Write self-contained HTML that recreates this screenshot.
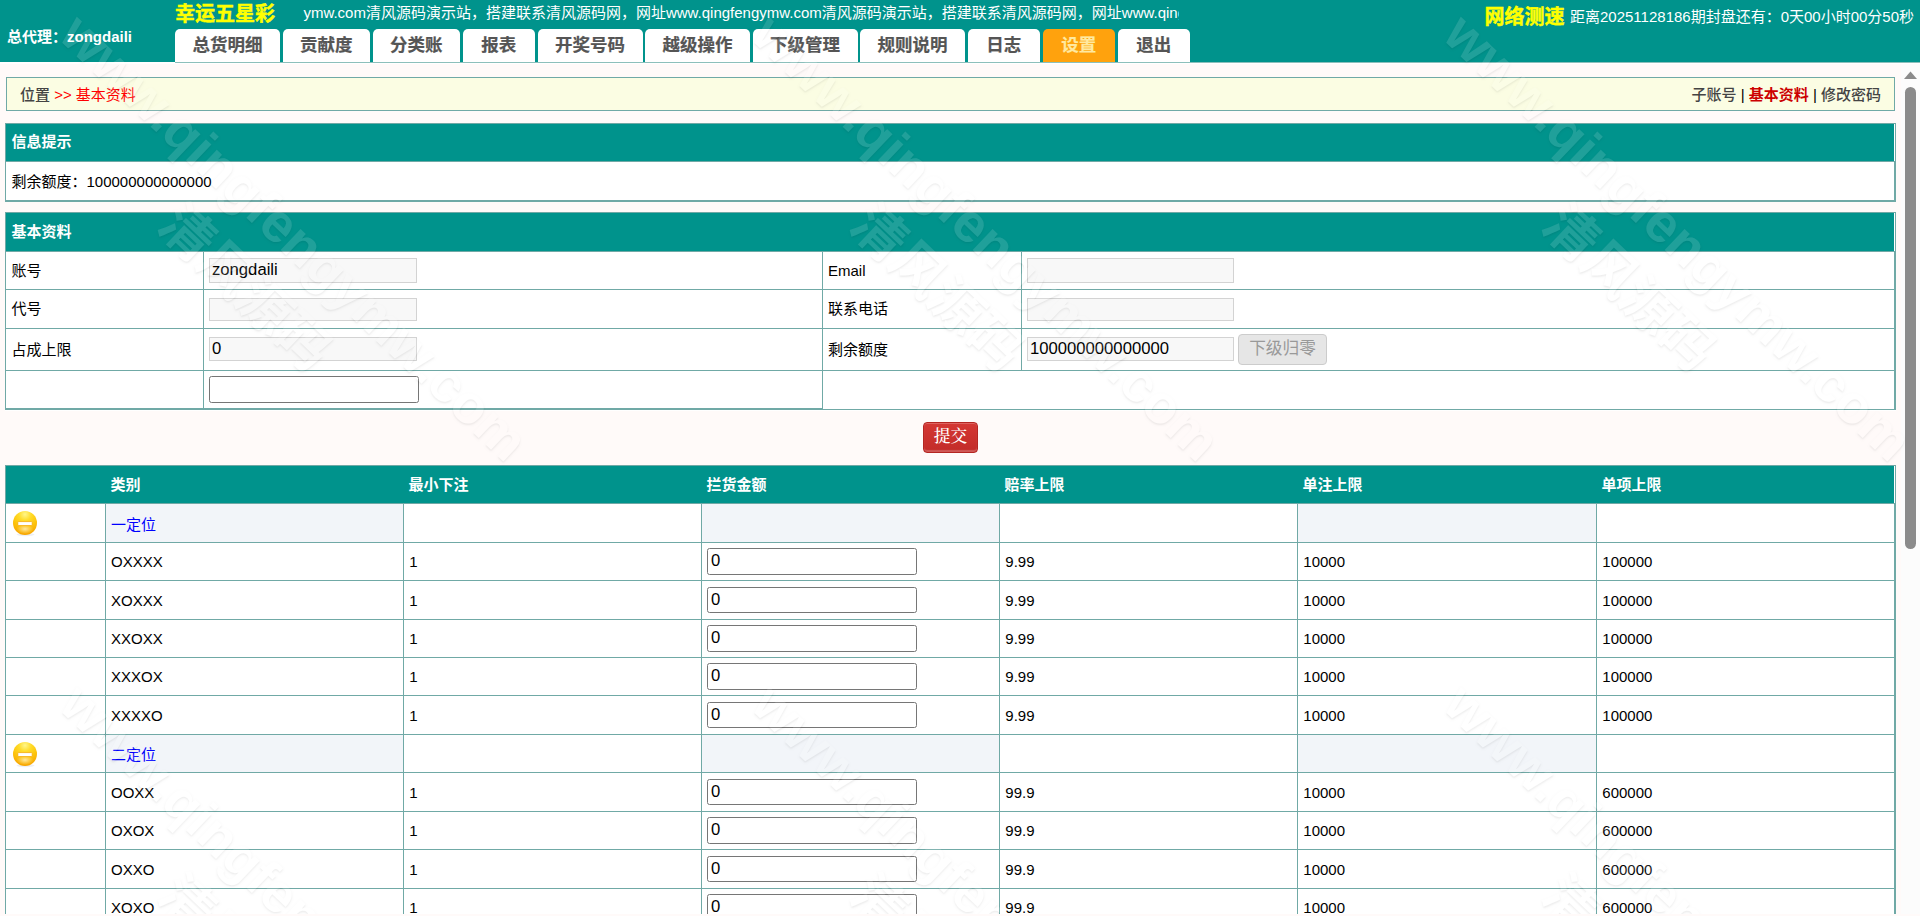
<!DOCTYPE html>
<html lang="zh-CN"><head><meta charset="utf-8"><title>基本资料</title><style>
*{box-sizing:border-box;margin:0;padding:0}
html,body{width:1920px;height:916px;overflow:hidden}
body{position:relative;background:#fffaf9;font-family:"Liberation Sans","Noto Sans CJK SC",sans-serif;font-size:15px;color:#000}
.a{position:absolute;white-space:nowrap}
.t{position:absolute;white-space:nowrap;line-height:20px;height:20px}
.hdr{left:0;top:0;width:1920px;height:62px;background:#00938c}
.tab{top:29px;height:33px;background:#fff;border-radius:5px 5px 0 0;text-align:center;font-weight:bold;font-size:17.5px;line-height:32px;color:#555;-webkit-text-stroke:.2px #555}
.tab.on{background:#ffa20d;color:#ffe9a0;-webkit-text-stroke:.2px #ffe9a0}
.teal{background:#00938c}
.w{background:#fff}
.ln{background:#70a9a6}
.hb{color:#fff;font-weight:bold}
.inp{position:absolute;background:#fff;border:1px solid #767676;border-radius:2.5px;font-size:16.67px;line-height:20px;padding-left:3px;white-space:nowrap;overflow:hidden}
.dis{position:absolute;background:#f8f8f8;border:1px solid #d3d3d3;font-size:16.67px;line-height:20px;padding-left:2px;white-space:nowrap;overflow:hidden}
.alt{background:#f2f5f9}
a{color:#00f;text-decoration:none}
.wm{font-weight:bold;font-size:54.7px;line-height:80px;height:80px;color:#fff;opacity:.125;text-shadow:1px 1px 2px rgba(0,0,0,.55);transform-origin:0 50%;transform:rotate(43.5deg);pointer-events:none;font-family:"Liberation Sans","Noto Sans CJK SC",sans-serif}
</style></head><body>
<div class="a hdr" style="left:0px;top:0px;width:1920px;height:62px;"></div>
<div class="a w" style="left:0px;top:62px;width:1920px;height:2px;"></div>
<div class="a " style="left:175px;top:62px;width:1745px;height:1px;background:#8cbfbb"></div>
<div class="t hb" style="left:7px;top:27px;">总代理：zongdaili</div>
<div class="t " style="left:175px;top:3.8px;font-size:20px;font-weight:bold;color:#ff0;-webkit-text-stroke:.45px #ff0">幸运五星彩</div>
<div class="a" style="left:303px;top:2px;width:876px;height:22px;overflow:hidden;color:#fff;line-height:22px"><span style="position:absolute;left:0.4px;top:0">ymw.com清风源码演示站，搭建联系清风源码网，网址www.qingfengymw.com清风源码演示站，搭建联系清风源码网，网址www.qingfengymw.com清风源码演示站</span></div>
<div class="a tab" style="left:175px;width:105px">总货明细</div>
<div class="a tab" style="left:282.5px;width:87.5px">贡献度</div>
<div class="a tab" style="left:372.5px;width:87.5px">分类账</div>
<div class="a tab" style="left:462.5px;width:72.5px">报表</div>
<div class="a tab" style="left:537.5px;width:105px">开奖号码</div>
<div class="a tab" style="left:645px;width:105px">越级操作</div>
<div class="a tab" style="left:752.5px;width:105px">下级管理</div>
<div class="a tab" style="left:860px;width:105px">规则说明</div>
<div class="a tab" style="left:967.5px;width:72.5px">日志</div>
<div class="a tab on" style="left:1042.5px;width:72.5px">设置</div>
<div class="a tab" style="left:1117.5px;width:72.5px">退出</div>
<div class="t " style="left:1484.5px;top:7px;font-size:20px;font-weight:bold;color:#ff0;-webkit-text-stroke:.45px #ff0">网络测速</div>
<div class="t " style="left:1570px;top:7.3px;color:#fff">距离20251128186期封盘还有：0天00小时00分50秒</div>
<div class="a " style="left:1901px;top:64px;width:19px;height:850px;background:#fcfcfc"></div>
<svg class="a" style="left:1901px;top:64px" width="19" height="850" viewBox="0 0 19 850"><path d="M9.5 7.5 L16 15 L3 15 Z" fill="#8b8b8b"/><rect x="4" y="23" width="11" height="462" rx="5.5" fill="#8b8b8b"/></svg>
<div class="a " style="left:6px;top:77px;width:1889px;height:34px;background:#fbfde3;border:1px solid #70a9a6"></div>
<div class="t " style="left:20px;top:84.5px;"><span style="color:#444;font-weight:500">位置</span> <span style="color:#f00">&gt;&gt; 基本资料</span></div>
<div class="t " style="right:39px;top:84.5px;"><span style="color:#444;font-weight:500">子账号</span> | <b style="color:#c00">基本资料</b> | <span style="color:#444;font-weight:500">修改密码</span></div>
<div class="a w" style="left:5px;top:123px;width:1891px;height:79px;"></div>
<div class="a ln" style="left:5px;top:123px;width:1891px;height:1px;"></div>
<div class="a ln" style="left:5px;top:123px;width:1px;height:79px;"></div>
<div class="a ln" style="left:1894px;top:161px;width:2px;height:41px;"></div>
<div class="a ln" style="left:1895px;top:123px;width:1px;height:38px;"></div>
<div class="a teal" style="left:6px;top:124px;width:1888px;height:37px;"></div>
<div class="a ln" style="left:5px;top:161px;width:1890px;height:1px;"></div>
<div class="a ln" style="left:5px;top:200px;width:1891px;height:2px;"></div>
<div class="t hb" style="left:11.5px;top:132.4px;">信息提示</div>
<div class="t " style="left:11.5px;top:171.5px;">剩余额度：100000000000000</div>
<div class="a w" style="left:5px;top:212px;width:1891px;height:198px;"></div>
<div class="a ln" style="left:5px;top:212px;width:1891px;height:1px;"></div>
<div class="a ln" style="left:5px;top:212px;width:1px;height:198px;"></div>
<div class="a ln" style="left:1894px;top:251px;width:2px;height:159px;"></div>
<div class="a ln" style="left:1895px;top:212px;width:1px;height:39px;"></div>
<div class="a teal" style="left:6px;top:213px;width:1888px;height:38px;"></div>
<div class="a ln" style="left:5px;top:251px;width:1890px;height:1px;"></div>
<div class="a ln" style="left:5px;top:408px;width:818px;height:2px;"></div>
<div class="a ln" style="left:822px;top:409px;width:1074px;height:1px;"></div>
<div class="a w" style="left:5px;top:410px;width:1891px;height:1px;"></div>
<div class="t hb" style="left:11.5px;top:222px;">基本资料</div>
<div class="a ln" style="left:5px;top:289px;width:1890px;height:1px;"></div>
<div class="a ln" style="left:5px;top:328px;width:1890px;height:1px;"></div>
<div class="a ln" style="left:5px;top:370px;width:1890px;height:1px;"></div>
<div class="a ln" style="left:203px;top:251px;width:1px;height:158px;"></div>
<div class="a ln" style="left:822px;top:251px;width:1px;height:158px;"></div>
<div class="a ln" style="left:1021px;top:251px;width:1px;height:119px;"></div>
<div class="t " style="left:11.5px;top:260.5px;">账号</div>
<div class="t " style="left:828px;top:260.5px;">Email</div>
<div class="t " style="left:11.5px;top:299px;">代号</div>
<div class="t " style="left:828px;top:299px;">联系电话</div>
<div class="t " style="left:11.5px;top:339.5px;">占成上限</div>
<div class="t " style="left:828px;top:339.5px;">剩余额度</div>
<div class="dis" style="left:209px;top:258px;width:208px;height:24.5px;line-height:21.5px">zongdaili</div>
<div class="dis" style="left:209px;top:297.5px;width:208px;height:23px;line-height:20px"></div>
<div class="dis" style="left:209px;top:337px;width:208px;height:24px;line-height:21px">0</div>
<div class="inp" style="left:209px;top:376px;width:210px;height:26.5px;line-height:23.5px"></div>
<div class="dis" style="left:1027px;top:258px;width:207px;height:24.5px;line-height:21.5px"></div>
<div class="dis" style="left:1027px;top:297.5px;width:207px;height:23px;line-height:20px"></div>
<div class="dis" style="left:1027px;top:337px;width:207px;height:24px;line-height:21px">100000000000000</div>
<div class="a" style="left:1238px;top:334px;width:89px;height:31px;background:#e6e6e6;border:1px solid #ccc;border-radius:4px;color:#999;font-size:16.67px;line-height:28px;text-align:center">下级归零</div>
<div class="a" style="left:923px;top:422px;width:55px;height:31px;border-radius:4px;border:1px solid #b42622;background:linear-gradient(#d43834,#c22b28);color:#fff;font-family:'Liberation Serif','Noto Serif CJK SC',serif;font-size:16.67px;font-weight:500;line-height:28px;text-align:center;box-shadow:inset 0 1px 0 rgba(255,255,255,.22),inset 0 -2px 1px rgba(255,255,255,.22)">提交</div>
<div class="a w" style="left:5px;top:465px;width:1891px;height:451px;"></div>
<div class="a ln" style="left:5px;top:465px;width:1891px;height:1px;"></div>
<div class="a ln" style="left:5px;top:465px;width:1px;height:451px;"></div>
<div class="a ln" style="left:1894px;top:503px;width:2px;height:413px;"></div>
<div class="a ln" style="left:1895px;top:465px;width:1px;height:38px;"></div>
<div class="a teal" style="left:6px;top:466px;width:1888px;height:37px;"></div>
<div class="a ln" style="left:5px;top:503px;width:1890px;height:1px;"></div>
<div class="t hb" style="left:110.5px;top:474.5px;">类别</div>
<div class="t hb" style="left:408.5px;top:474.5px;">最小下注</div>
<div class="t hb" style="left:706.5px;top:474.5px;">拦货金额</div>
<div class="t hb" style="left:1004.5px;top:474.5px;">赔率上限</div>
<div class="t hb" style="left:1302.5px;top:474.5px;">单注上限</div>
<div class="t hb" style="left:1601.5px;top:474.5px;">单项上限</div>
<div class="a alt" style="left:105px;top:503.75px;width:298px;height:38.43px;"></div>
<div class="a alt" style="left:701px;top:503.75px;width:298px;height:38.43px;"></div>
<div class="a alt" style="left:1297px;top:503.75px;width:299px;height:38.43px;"></div>
<svg class="a" style="left:12.3px;top:510.065px" width="26" height="27" viewBox="0 0 26 27"><defs><radialGradient id="g0" cx="50%" cy="14%" r="85%"><stop offset="0" stop-color="#fff68a"/><stop offset="0.3" stop-color="#ffdc2a"/><stop offset="0.62" stop-color="#fdc50c"/><stop offset="1" stop-color="#f7a400"/></radialGradient><radialGradient id="h0" cx="50%" cy="50%" r="50%"><stop offset="0" stop-color="#ffe9a6" stop-opacity=".95"/><stop offset="1" stop-color="#ffe08a" stop-opacity="0"/></radialGradient></defs><ellipse cx="13.5" cy="24.6" rx="9" ry="1.6" fill="#9aa8c0" opacity=".18"/><circle cx="13" cy="13" r="12" fill="url(#g0)"/><ellipse cx="13" cy="19" rx="8.5" ry="5" fill="url(#h0)"/><rect x="5.8" y="11.6" width="14.4" height="4" rx=".6" fill="#fff" stroke="#f5a800" stroke-width=".8"/></svg>
<div class="t " style="left:111px;top:514.665px;"><a>一定位</a></div>
<div class="t " style="left:111px;top:552.095px;">OXXXX</div>
<div class="t " style="left:409.3px;top:552.095px;">1</div>
<div class="inp" style="left:707px;top:548.18px;width:210px;height:26.5px;line-height:23.5px">0</div>
<div class="t " style="left:1005.3px;top:552.095px;">9.99</div>
<div class="t " style="left:1303.3px;top:552.095px;">10000</div>
<div class="t " style="left:1602.3px;top:552.095px;">100000</div>
<div class="t " style="left:111px;top:590.525px;">XOXXX</div>
<div class="t " style="left:409.3px;top:590.525px;">1</div>
<div class="inp" style="left:707px;top:586.61px;width:210px;height:26.5px;line-height:23.5px">0</div>
<div class="t " style="left:1005.3px;top:590.525px;">9.99</div>
<div class="t " style="left:1303.3px;top:590.525px;">10000</div>
<div class="t " style="left:1602.3px;top:590.525px;">100000</div>
<div class="t " style="left:111px;top:628.955px;">XXOXX</div>
<div class="t " style="left:409.3px;top:628.955px;">1</div>
<div class="inp" style="left:707px;top:625.04px;width:210px;height:26.5px;line-height:23.5px">0</div>
<div class="t " style="left:1005.3px;top:628.955px;">9.99</div>
<div class="t " style="left:1303.3px;top:628.955px;">10000</div>
<div class="t " style="left:1602.3px;top:628.955px;">100000</div>
<div class="t " style="left:111px;top:667.385px;">XXXOX</div>
<div class="t " style="left:409.3px;top:667.385px;">1</div>
<div class="inp" style="left:707px;top:663.47px;width:210px;height:26.5px;line-height:23.5px">0</div>
<div class="t " style="left:1005.3px;top:667.385px;">9.99</div>
<div class="t " style="left:1303.3px;top:667.385px;">10000</div>
<div class="t " style="left:1602.3px;top:667.385px;">100000</div>
<div class="t " style="left:111px;top:705.815px;">XXXXO</div>
<div class="t " style="left:409.3px;top:705.815px;">1</div>
<div class="inp" style="left:707px;top:701.9px;width:210px;height:26.5px;line-height:23.5px">0</div>
<div class="t " style="left:1005.3px;top:705.815px;">9.99</div>
<div class="t " style="left:1303.3px;top:705.815px;">10000</div>
<div class="t " style="left:1602.3px;top:705.815px;">100000</div>
<div class="a alt" style="left:105px;top:734.33px;width:298px;height:38.43px;"></div>
<div class="a alt" style="left:701px;top:734.33px;width:298px;height:38.43px;"></div>
<div class="a alt" style="left:1297px;top:734.33px;width:299px;height:38.43px;"></div>
<svg class="a" style="left:12.3px;top:740.645px" width="26" height="27" viewBox="0 0 26 27"><defs><radialGradient id="g6" cx="50%" cy="14%" r="85%"><stop offset="0" stop-color="#fff68a"/><stop offset="0.3" stop-color="#ffdc2a"/><stop offset="0.62" stop-color="#fdc50c"/><stop offset="1" stop-color="#f7a400"/></radialGradient><radialGradient id="h6" cx="50%" cy="50%" r="50%"><stop offset="0" stop-color="#ffe9a6" stop-opacity=".95"/><stop offset="1" stop-color="#ffe08a" stop-opacity="0"/></radialGradient></defs><ellipse cx="13.5" cy="24.6" rx="9" ry="1.6" fill="#9aa8c0" opacity=".18"/><circle cx="13" cy="13" r="12" fill="url(#g6)"/><ellipse cx="13" cy="19" rx="8.5" ry="5" fill="url(#h6)"/><rect x="5.8" y="11.6" width="14.4" height="4" rx=".6" fill="#fff" stroke="#f5a800" stroke-width=".8"/></svg>
<div class="t " style="left:111px;top:745.245px;"><a>二定位</a></div>
<div class="t " style="left:111px;top:782.675px;">OOXX</div>
<div class="t " style="left:409.3px;top:782.675px;">1</div>
<div class="inp" style="left:707px;top:778.76px;width:210px;height:26.5px;line-height:23.5px">0</div>
<div class="t " style="left:1005.3px;top:782.675px;">99.9</div>
<div class="t " style="left:1303.3px;top:782.675px;">10000</div>
<div class="t " style="left:1602.3px;top:782.675px;">600000</div>
<div class="t " style="left:111px;top:821.105px;">OXOX</div>
<div class="t " style="left:409.3px;top:821.105px;">1</div>
<div class="inp" style="left:707px;top:817.19px;width:210px;height:26.5px;line-height:23.5px">0</div>
<div class="t " style="left:1005.3px;top:821.105px;">99.9</div>
<div class="t " style="left:1303.3px;top:821.105px;">10000</div>
<div class="t " style="left:1602.3px;top:821.105px;">600000</div>
<div class="t " style="left:111px;top:859.535px;">OXXO</div>
<div class="t " style="left:409.3px;top:859.535px;">1</div>
<div class="inp" style="left:707px;top:855.62px;width:210px;height:26.5px;line-height:23.5px">0</div>
<div class="t " style="left:1005.3px;top:859.535px;">99.9</div>
<div class="t " style="left:1303.3px;top:859.535px;">10000</div>
<div class="t " style="left:1602.3px;top:859.535px;">600000</div>
<div class="t " style="left:111px;top:897.965px;">XOXO</div>
<div class="t " style="left:409.3px;top:897.965px;">1</div>
<div class="inp" style="left:707px;top:894.05px;width:210px;height:26.5px;line-height:23.5px">0</div>
<div class="t " style="left:1005.3px;top:897.965px;">99.9</div>
<div class="t " style="left:1303.3px;top:897.965px;">10000</div>
<div class="t " style="left:1602.3px;top:897.965px;">600000</div>
<div class="a ln" style="left:5px;top:542px;width:1890px;height:1px;"></div>
<div class="a ln" style="left:5px;top:580px;width:1890px;height:1px;"></div>
<div class="a ln" style="left:5px;top:619px;width:1890px;height:1px;"></div>
<div class="a ln" style="left:5px;top:657px;width:1890px;height:1px;"></div>
<div class="a ln" style="left:5px;top:695px;width:1890px;height:1px;"></div>
<div class="a ln" style="left:5px;top:734px;width:1890px;height:1px;"></div>
<div class="a ln" style="left:5px;top:772px;width:1890px;height:1px;"></div>
<div class="a ln" style="left:5px;top:811px;width:1890px;height:1px;"></div>
<div class="a ln" style="left:5px;top:849px;width:1890px;height:1px;"></div>
<div class="a ln" style="left:5px;top:888px;width:1890px;height:1px;"></div>
<div class="a ln" style="left:105px;top:503px;width:1px;height:413px;"></div>
<div class="a ln" style="left:403px;top:503px;width:1px;height:413px;"></div>
<div class="a ln" style="left:701px;top:503px;width:1px;height:413px;"></div>
<div class="a ln" style="left:999px;top:503px;width:1px;height:413px;"></div>
<div class="a ln" style="left:1297px;top:503px;width:1px;height:413px;"></div>
<div class="a ln" style="left:1596px;top:503px;width:1px;height:413px;"></div>
<div class="a wm" style="left:70px;top:-16px">www.qingfengymw.com</div>
<div class="a wm" style="left:168px;top:175px;font-size:53px">清风源码</div>
<div class="a wm" style="left:762px;top:-16px">www.qingfengymw.com</div>
<div class="a wm" style="left:860px;top:175px;font-size:53px">清风源码</div>
<div class="a wm" style="left:1454px;top:-16px">www.qingfengymw.com</div>
<div class="a wm" style="left:1552px;top:175px;font-size:53px">清风源码</div>
<div class="a wm" style="left:70px;top:654px">www.qingfengymw.com</div>
<div class="a wm" style="left:168px;top:845px;font-size:53px">清风源码</div>
<div class="a wm" style="left:762px;top:654px">www.qingfengymw.com</div>
<div class="a wm" style="left:860px;top:845px;font-size:53px">清风源码</div>
<div class="a wm" style="left:1454px;top:654px">www.qingfengymw.com</div>
<div class="a wm" style="left:1552px;top:845px;font-size:53px">清风源码</div>
<div class="a " style="left:0px;top:914px;width:1920px;height:2px;background:#fffaf9"></div>
</body></html>
